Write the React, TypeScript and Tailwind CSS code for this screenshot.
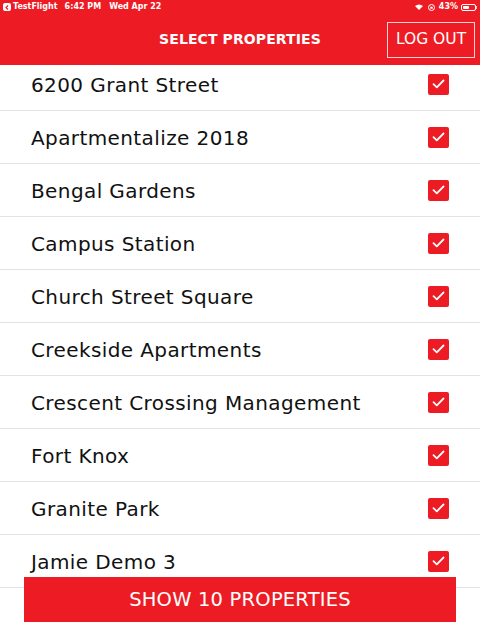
import React from 'react'

const properties = [
  '6200 Grant Street',
  'Apartmentalize 2018',
  'Bengal Gardens',
  'Campus Station',
  'Church Street Square',
  'Creekside Apartments',
  'Crescent Crossing Management',
  'Fort Knox',
  'Granite Park',
  'Jamie Demo 3',
]

const CheckBox = () => (
  <div className="w-[21px] h-[21px] rounded-[2px] bg-[#ed1c24] flex items-center justify-center">
    <svg width="13" height="10" viewBox="0 0 13 10" fill="none">
      <path d="M1.5 5.2 L4.8 8.3 L11.5 1.5" stroke="white" strokeWidth="1.8" strokeLinecap="round" strokeLinejoin="round" />
    </svg>
  </div>
)

const StatusBar = () => (
  <div className="h-[14px] flex items-center justify-between px-[3px] text-white text-[8px] font-semibold leading-none">
    <div className="flex items-center gap-[2px]">
      <div className="w-[8px] h-[8px] rounded-[2px] bg-white flex items-center justify-center">
        <svg width="4" height="5" viewBox="0 0 4 5">
          <path d="M3 0.5 L1 2.5 L3 4.5" stroke="#ed1c24" strokeWidth="1.2" fill="none" />
        </svg>
      </div>
      <span>TestFlight</span>
      <span className="ml-[5px]">6:42 PM</span>
      <span className="ml-[6px]">Wed Apr 22</span>
    </div>
    <div className="flex items-center gap-[3px]">
      <svg width="8" height="6" viewBox="0 0 8 6">
        <path d="M0 2 Q4 -1 8 2 L4 6 Z" fill="white" />
      </svg>
      <svg width="7" height="7" viewBox="0 0 7 7" className="ml-[2px]">
        <circle cx="3.5" cy="3.5" r="3" fill="none" stroke="white" strokeWidth="1" />
        <rect x="2.3" y="2.7" width="2.4" height="2" fill="white" />
      </svg>
      <span className="ml-[1px]">43%</span>
      <div className="flex items-center">
        <div className="w-[15px] h-[7px] rounded-[2px] border border-white p-[1px] flex">
          <div className="w-[6px] h-full bg-white rounded-[1px]" />
        </div>
        <div className="w-[1px] h-[3px] bg-white/70" />
      </div>
    </div>
  </div>
)

export default function App() {
  return (
    <div
      className="relative w-[480px] h-[641px] overflow-hidden bg-white flex flex-col"
      style={{ fontFamily: '"DejaVu Sans", sans-serif' }}
    >
      {/* Header */}
      <div className="bg-[#ed1c24] h-[65px] shrink-0 flex flex-col z-10">
        <StatusBar />
        <div className="relative flex-1 flex items-center justify-center pb-[1px]">
          <span className="text-white font-bold text-[14px] tracking-[0.1px]">SELECT PROPERTIES</span>
          <button className="absolute right-[5px] top-[8px] w-[88px] h-[36px] border border-white/80 text-white text-[15.5px] flex items-center justify-center">
            LOG OUT
          </button>
        </div>
      </div>

      {/* List */}
      <div className="flex-1 overflow-hidden">
        <div className="mt-[-7px]">
          {properties.map((p) => (
            <div key={p} className="h-[53px] border-b border-[#e3e3e3] flex items-center justify-between pl-[31px] pr-[31px]">
              <span className="text-[#111] text-[20px] tracking-[0.4px] pt-[2px]">{p}</span>
              <CheckBox />
            </div>
          ))}
        </div>
      </div>

      {/* Bottom action */}
      <button className="absolute left-[24px] right-[24px] top-[577px] h-[45px] bg-[#ed1c24] text-white text-[19.5px] tracking-[0.2px]">
        SHOW 10 PROPERTIES
      </button>
    </div>
  )
}
